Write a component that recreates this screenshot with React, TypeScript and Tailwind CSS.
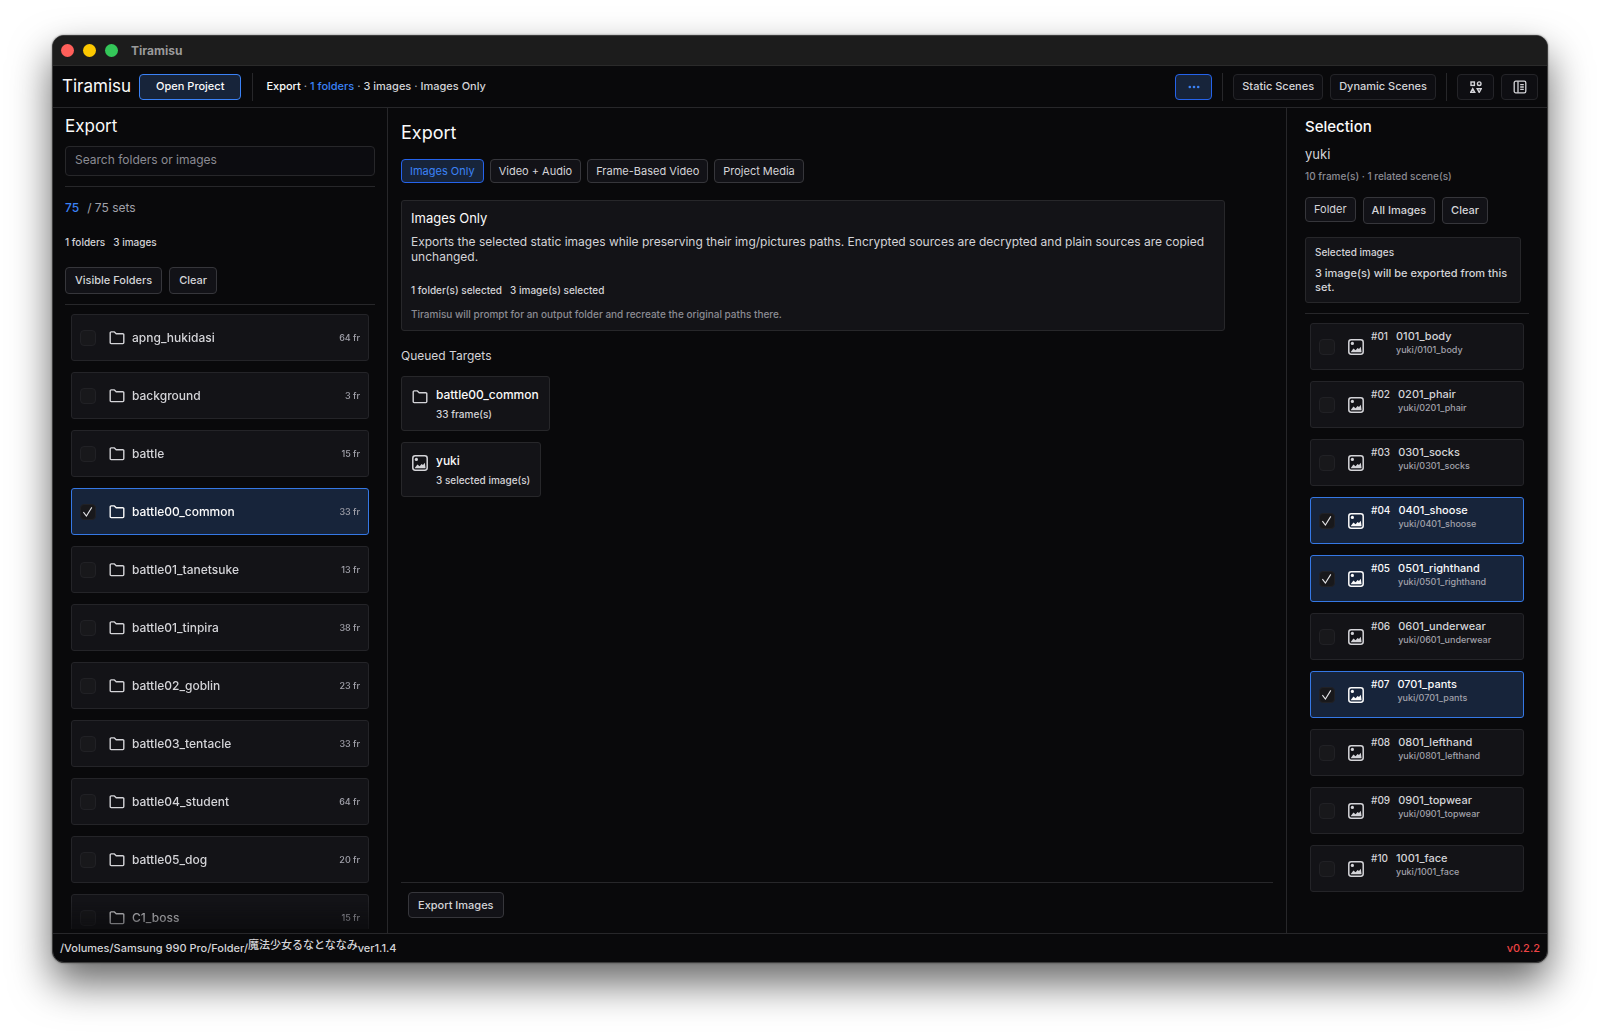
import { useState } from "react";
import clsx from "clsx";

const folders = [
  { name: "apng_hukidasi", frames: 64 },
  { name: "background", frames: 3 },
  { name: "battle", frames: 15 },
  { name: "battle00_common", frames: 33 },
  { name: "battle01_tanetsuke", frames: 13 },
  { name: "battle01_tinpira", frames: 38 },
  { name: "battle02_goblin", frames: 23 },
  { name: "battle03_tentacle", frames: 33 },
  { name: "battle04_student", frames: 64 },
  { name: "battle05_dog", frames: 20 },
  { name: "C1_boss", frames: 15 },
];

const images = [
  "0101_body",
  "0201_phair",
  "0301_socks",
  "0401_shoose",
  "0501_righthand",
  "0601_underwear",
  "0701_pants",
  "0801_lefthand",
  "0901_topwear",
  "1001_face",
];

const modes = ["Images Only", "Video + Audio", "Frame-Based Video", "Project Media"];

function toggle(list: string[], value: string) {
  return list.includes(value)
    ? list.filter((item) => item !== value)
    : [...list, value];
}

function FolderIcon({ className }: { className?: string }) {
  return (
    <svg
      viewBox="0 0 16 16"
      className={clsx("size-4 shrink-0", className)}
      fill="none"
      stroke="currentColor"
      strokeWidth="1.4"
      strokeLinejoin="round"
    >
      <path d="M1.2 2.9a1 1 0 0 1 1-1h3.2l1.8 1.8h6.6a1 1 0 0 1 1 1v7.9a1 1 0 0 1-1 1H2.2a1 1 0 0 1-1-1z" />
    </svg>
  );
}

function ImageIcon({ className }: { className?: string }) {
  return (
    <svg viewBox="0 0 16 16" className={clsx("size-4 shrink-0", className)} fill="none">
      <rect x="0.8" y="0.8" width="14.4" height="14.4" rx="2.4" stroke="currentColor" strokeWidth="1.5" />
      <circle cx="4.4" cy="4.4" r="1.6" fill="currentColor" />
      <path d="M2.6 13.2l2.8-3.6 2.2 1.6 2-2.2 1.4 1 1.8-2.2 0.8 5.4z" fill="currentColor" />
    </svg>
  );
}

function Button({
  children,
  variant = "default",
  className,
  ...props
}: React.ButtonHTMLAttributes<HTMLButtonElement> & {
  variant?: "default" | "subtle" | "active" | "primary";
}) {
  return (
    <button
      type="button"
      className={clsx(
        "flex items-center justify-center rounded border text-[11px] whitespace-nowrap",
        variant === "default" && "border-[#36363b] bg-[#121217] text-[#d4d4d8]",
        variant === "subtle" && "border-[#242428] bg-[#0e0e12] text-[#d4d4d8]",
        variant === "active" && "border-[#2563eb] bg-[#17243a] text-[#3b82f6]",
        variant === "primary" && "border-[#3b82f6] bg-[#17243a] text-[#fafafa]",
        className
      )}
      {...props}
    >
      {children}
    </button>
  );
}

function Checkbox({
  checked,
  onChange,
}: {
  checked: boolean;
  onChange: () => void;
}) {
  return (
    <span className="grid size-4 shrink-0">
      <input
        type="checkbox"
        checked={checked}
        onChange={onChange}
        className="col-start-1 row-start-1 size-4 appearance-none rounded border border-[#212125] bg-[#18181b]"
      />
      {checked && (
        <svg
          viewBox="0 0 16 16"
          className="pointer-events-none col-start-1 row-start-1 size-4 text-[#e4e4e7]"
          fill="none"
          stroke="currentColor"
          strokeWidth="1.1"
        >
          <path d="M3.4 8.2l3 3.8 5.4-8.6" />
        </svg>
      )}
    </span>
  );
}

function Divider() {
  return <div className="h-7 w-px shrink-0 bg-[#27272a]" />;
}

function Header() {
  return (
    <header className="flex h-[42px] shrink-0 items-center border-b border-[#27272a] px-[9px]">
      <span className="text-[17px] text-[#fafafa]">Tiramisu</span>
      <Button variant="primary" className="ml-2 h-[26px] px-4 font-medium">
        Open Project
      </Button>
      <div className="ml-[11px] flex items-center gap-[13px]">
        <Divider />
        <p className="text-[11px] font-medium whitespace-nowrap text-[#d4d4d8]">
          <span className="text-[#fafafa]">Export</span>
          <span className="text-[#a1a1aa]"> · </span>
          <span className="text-[#3b82f6]">1 folders</span>
          <span className="text-[#a1a1aa]"> · </span>3 images
          <span className="text-[#a1a1aa]"> · </span>Images Only
        </p>
      </div>
      <div className="ml-auto flex items-center gap-2.5">
        <Button variant="active" className="h-[26px] w-[37px]" aria-label="More">
          <svg viewBox="0 0 12 4" className="h-1 w-3" fill="currentColor">
            <circle cx="1.8" cy="2" r="1.3" />
            <circle cx="6" cy="2" r="1.3" />
            <circle cx="10.2" cy="2" r="1.3" />
          </svg>
        </Button>
        <Divider />
        <div className="flex gap-[7px]">
          <Button variant="subtle" className="h-[26px] px-2 font-medium">
            Static Scenes
          </Button>
          <Button variant="subtle" className="h-[26px] px-2 font-medium">
            Dynamic Scenes
          </Button>
        </div>
        <Divider />
        <div className="flex gap-[7px]">
          <Button variant="subtle" className="h-[26px] w-[37px]" aria-label="Shapes">
            <svg viewBox="0 0 12 12" className="size-3" fill="none" stroke="currentColor" strokeWidth="1.4">
              <rect x="1" y="1" width="3.4" height="3.4" />
              <circle cx="9.2" cy="2.7" r="1.8" />
              <path d="M2.7 7.6l2 3.6h-4z" />
              <path d="M7.2 7.8h4l-2 3.6z" />
            </svg>
          </Button>
          <Button variant="subtle" className="h-[26px] w-[37px]" aria-label="Toggle sidebar">
            <svg viewBox="0 0 14 14" className="size-3.5" fill="none" stroke="currentColor" strokeWidth="1.3">
              <rect x="1.2" y="1.2" width="11.6" height="11.6" rx="1.6" />
              <path d="M5 1.2v11.6M7.2 4.6h3.6M7.2 7h3.6M7.2 9.4h3.6" />
            </svg>
          </Button>
        </div>
      </div>
    </header>
  );
}

function FolderPanel({
  selected,
  onToggle,
}: {
  selected: string[];
  onToggle: (name: string) => void;
}) {
  return (
    <aside className="flex w-[335px] shrink-0 flex-col border-r border-[#27272a] px-3 pt-1.5 pb-1">
      <h2 className="text-[17px] leading-6 text-[#fafafa]">Export</h2>
      <input
        type="text"
        aria-label="Search folders or images"
        placeholder="Search folders or images"
        className="mt-2 h-[30px] rounded border border-[#27272a] bg-[#0c0c10] px-[9px] pb-[3px] text-xs text-[#d4d4d8] outline-none placeholder:text-[#8b8b93]"
      />
      <hr className="mt-2.5 border-[#27272a]" />
      <p className="mt-[11px] text-xs leading-5 text-[#a1a1aa]">
        <span className="mr-2 font-medium text-[#3b82f6]">75</span>/ 75 sets
      </p>
      <p className="mt-4 flex gap-2 text-[10px] leading-4 font-medium text-[#d4d4d8]">
        <span>1 folders</span>
        <span>3 images</span>
      </p>
      <div className="mt-[17px] flex gap-[7px]">
        <Button className="h-[27px] px-[9px] font-medium">Visible Folders</Button>
        <Button className="h-[27px] px-[9px] font-medium">Clear</Button>
      </div>
      <hr className="mt-2.5 border-[#27272a]" />
      <div className="min-h-0 flex-1 overflow-hidden mask-[linear-gradient(to_top,rgba(0,0,0,0.4),black_28px)] px-1.5 pt-[9px]">
        <ul className="flex flex-col gap-[11px]">
          {folders.map((folder) => {
            const checked = selected.includes(folder.name);
            return (
              <li key={folder.name}>
                <label
                  className={clsx(
                    "flex h-[47px] items-center rounded-[3px] border px-2",
                    checked
                      ? "border-[#3578e5] bg-[#17243a] text-[#fafafa]"
                      : "border-[#242428] bg-[#131317] text-[#d4d4d8]"
                  )}
                >
                  <Checkbox checked={checked} onChange={() => onToggle(folder.name)} />
                  <FolderIcon className="ml-[13px]" />
                  <span className="ml-[7px] flex-1 text-xs font-medium">{folder.name}</span>
                  <span className="text-[9px] font-medium text-[#a1a1aa]">{folder.frames} fr</span>
                </label>
              </li>
            );
          })}
        </ul>
      </div>
    </aside>
  );
}

function ExportPanel() {
  const [mode, setMode] = useState("Images Only");

  return (
    <main className="flex min-w-0 flex-1 flex-col px-[13px] pt-[13px]">
      <h1 className="text-lg leading-6 text-[#fafafa]">Export</h1>
      <div className="mt-3.5 flex gap-1.5">
        {modes.map((item) => (
          <Button
            key={item}
            variant={item === mode ? "active" : "default"}
            className="h-6 px-2"
            onClick={() => setMode(item)}
          >
            {item}
          </Button>
        ))}
      </div>
      <section className="mt-[17px] max-w-[824px] rounded-[3px] border border-[#27272a] bg-[#131317] px-[9px] pt-[7px] pb-2">
        <h3 className="text-[13px] leading-5 text-[#fafafa]">Images Only</h3>
        <p className="mt-1.5 text-xs leading-[15px] text-[#d4d4d8]">
          Exports the selected static images while preserving their img/pictures paths. Encrypted
          sources are decrypted and plain sources are copied unchanged.
        </p>
        <p className="mt-[18px] flex gap-2 text-[10px] leading-4 font-medium text-[#d4d4d8]">
          <span>1 folder(s) selected</span>
          <span>3 image(s) selected</span>
        </p>
        <p className="mt-2 text-[10px] leading-4 font-medium text-[#8b8b93]">
          Tiramisu will prompt for an output folder and recreate the original paths there.
        </p>
      </section>
      <h2 className="mt-[15px] text-xs leading-5 text-[#d4d4d8]">Queued Targets</h2>
      <ul className="mt-2.5 flex flex-col items-start gap-[11px]">
        <li className="flex gap-2 rounded-[3px] border border-[#27272a] bg-[#131317] px-2.5 pt-2 pb-1.5">
          <FolderIcon className="mt-1 text-[#d4d4d8]" />
          <div>
            <p className="text-xs leading-[19px] font-medium text-[#fafafa]">battle00_common</p>
            <p className="text-[10px] leading-5 font-medium text-[#d4d4d8]">33 frame(s)</p>
          </div>
        </li>
        <li className="flex gap-2 rounded-[3px] border border-[#27272a] bg-[#131317] px-2.5 pt-2 pb-1.5">
          <ImageIcon className="mt-1 text-[#d4d4d8]" />
          <div>
            <p className="text-xs leading-[19px] font-medium text-[#fafafa]">yuki</p>
            <p className="text-[10px] leading-5 font-medium text-[#d4d4d8]">3 selected image(s)</p>
          </div>
        </li>
      </ul>
      <div className="mt-auto border-t border-[#27272a] px-[7px] pt-[9px] pb-[15px]">
        <Button className="h-[26px] px-[9px] font-medium">Export Images</Button>
      </div>
    </main>
  );
}

function SelectionPanel({
  selected,
  onToggle,
}: {
  selected: string[];
  onToggle: (name: string) => void;
}) {
  return (
    <aside className="flex w-[261px] shrink-0 flex-col overflow-hidden border-l border-[#27272a] pt-[7px] pr-[18px] pl-[18px]">
      <h2 className="text-[15px] leading-6 font-medium text-[#fafafa]">Selection</h2>
      <p className="mt-[5px] text-[13px] leading-5 text-[#d4d4d8]">yuki</p>
      <p className="mt-1 text-[10px] leading-4 font-medium text-[#8b8b93]">
        10 frame(s) · 1 related scene(s)
      </p>
      <div className="mt-[13px] flex items-start gap-[7px]">
        <Button className="h-[25px] px-2">Folder</Button>
        <Button className="h-[27px] px-2 font-medium">All Images</Button>
        <Button className="h-[27px] px-2 font-medium">Clear</Button>
      </div>
      <section className="mt-[13px] mr-2 rounded-[3px] border border-[#27272a] bg-[#131317] px-[9px] pt-1.5 pb-2">
        <h3 className="text-[10px] leading-4 font-medium text-[#d4d4d8]">Selected images</h3>
        <p className="mt-1.5 text-[11px] leading-[14px] font-medium text-[#d4d4d8]">
          3 image(s) will be exported from this set.
        </p>
      </section>
      <hr className="mt-2.5 border-[#27272a]" />
      <ul className="mt-[9px] flex flex-col gap-[11px] px-[5px]">
        {images.map((name, index) => {
          const checked = selected.includes(name);
          return (
            <li key={name}>
              <label
                className={clsx(
                  "flex h-[47px] items-center rounded-[3px] border px-2",
                  checked
                    ? "border-[#3578e5] bg-[#17243a] text-[#fafafa]"
                    : "border-[#242428] bg-[#131317] text-[#d4d4d8]"
                )}
              >
                <Checkbox checked={checked} onChange={() => onToggle(name)} />
                <ImageIcon className="ml-[13px]" />
                <span className="ml-[7px] flex h-full gap-2 pt-[5px] leading-[14px] font-medium">
                  <span className="text-[10px]">#{String(index + 1).padStart(2, "0")}</span>
                  <span className="flex flex-col">
                    <span className="text-[11px] leading-[14px]">{name}</span>
                    <span className="text-[9px] leading-[14px] text-[#a1a1aa]">yuki/{name}</span>
                  </span>
                </span>
              </label>
            </li>
          );
        })}
      </ul>
    </aside>
  );
}

export default function App() {
  const [selectedFolders, setSelectedFolders] = useState(["battle00_common"]);
  const [selectedImages, setSelectedImages] = useState([
    "0401_shoose",
    "0501_righthand",
    "0701_pants",
  ]);

  return (
    <div className="flex h-screen flex-col overflow-hidden bg-white px-[52px] pt-[35px] pb-[69px] font-['Inter','Noto_Sans_CJK_JP',sans-serif]">
      <div className="flex min-h-0 flex-1 flex-col overflow-hidden rounded-xl border border-[#3c3c3c] bg-[#09090b] shadow-[0_0_2px_rgba(0,0,0,0.5),0_20px_40px_rgba(0,0,0,0.6)]">
        <div className="flex h-[30px] shrink-0 items-center gap-[9px] border-b border-[#2a2a2a] bg-[#1c1c1c] px-2">
          <span className="size-[13px] rounded-full bg-[#ff5f5a]" />
          <span className="size-[13px] rounded-full bg-[#fcc800]" />
          <span className="size-[13px] rounded-full bg-[#34c759]" />
          <span className="ml-1 text-xs font-bold text-[#9a9a9a]">Tiramisu</span>
        </div>
        <Header />
        <div className="flex min-h-0 flex-1">
          <FolderPanel
            selected={selectedFolders}
            onToggle={(name) => setSelectedFolders(toggle(selectedFolders, name))}
          />
          <ExportPanel />
          <SelectionPanel
            selected={selectedImages}
            onToggle={(name) => setSelectedImages(toggle(selectedImages, name))}
          />
        </div>
        <footer className="flex h-[29px] shrink-0 items-center justify-between border-t border-[#27272a] px-[7px] text-[11px] leading-4 font-medium text-[#d4d4d8]">
          <span className="flex items-start">
            /Volumes/Samsung 990 Pro/Folder/
            <span lang="ja" className="leading-[11px]">
              魔法少女るなとななみ
            </span>
            ver1.1.4
          </span>
          <span className="text-[#ef4444]">v0.2.2</span>
        </footer>
      </div>
    </div>
  );
}
